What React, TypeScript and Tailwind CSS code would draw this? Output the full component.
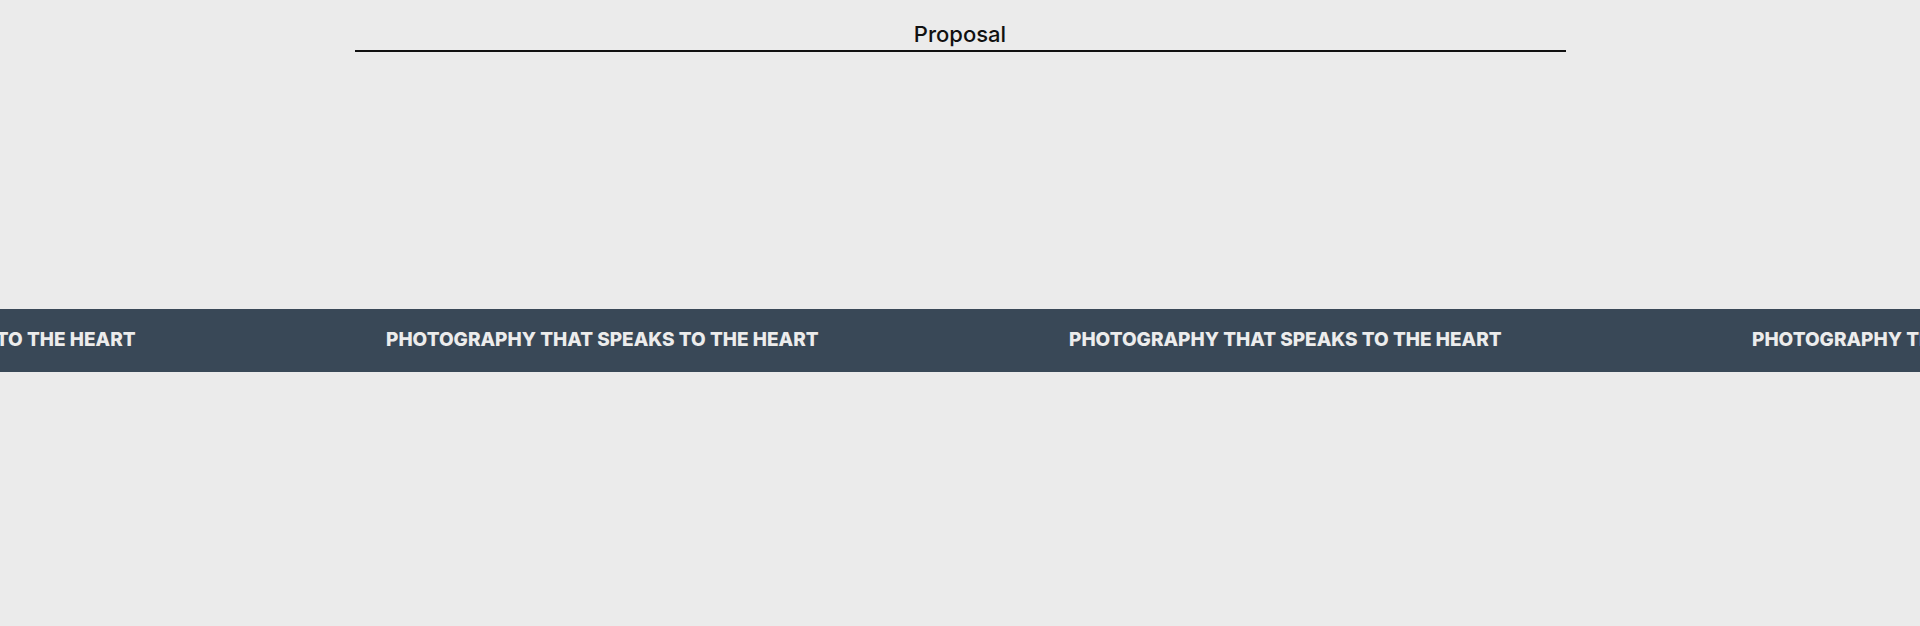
import React from 'react';

const TAGLINE = 'PHOTOGRAPHY THAT SPEAKS TO THE HEART';

export default function App() {
  const copies = [0, 1, 2, 3];

  return (
    <div className="min-h-screen w-full bg-[#ebebeb] overflow-hidden" style={{ fontFamily: 'Inter, "Noto Sans", sans-serif' }}>
      {/* header */}
      <header className="w-[1211px] mx-auto pt-[20px] pb-[2px] border-b-2 border-[#111]">
        <h1 className="text-center text-[22px] leading-[28px] font-medium text-[#111]">Proposal</h1>
      </header>

      {/* marquee band */}
      <section className="mt-[257px] h-[63px] bg-[#394857] flex items-center overflow-hidden">
        <div className="flex -ml-[297px]">
          {copies.map((i) => (
            <div key={i} className="w-[683px] shrink-0 whitespace-nowrap text-[19px] font-extrabold tracking-[0px] text-[#ececec]">
              {TAGLINE}
            </div>
          ))}
        </div>
      </section>
    </div>
  );
}
